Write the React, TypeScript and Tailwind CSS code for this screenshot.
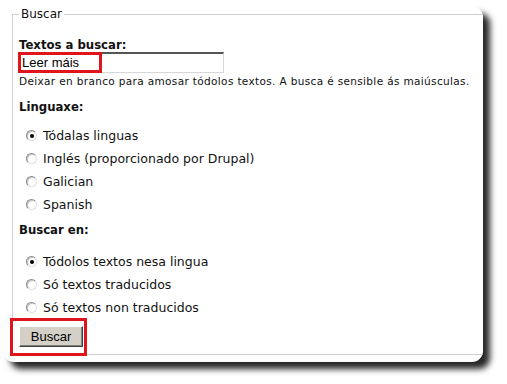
import React from 'react';

const verdana = { fontFamily: '"DejaVu Sans", Verdana, sans-serif' };

function Radio({ label, checked }: { label: string; checked?: boolean }) {
  return (
    <div className="flex h-[23px] items-center pl-[7px]">
      <span className="flex h-[11px] w-[11px] items-center justify-center rounded-full border border-t-[#8a8a8a] border-l-[#8a8a8a] border-r-[#e2e2e2] border-b-[#e2e2e2] bg-white shadow-[inset_1px_1px_0_#c8c8c8]">
        {checked && <span className="h-[4px] w-[4px] rounded-full bg-black" />}
      </span>
      <span className="ml-[6px] text-[12.5px] leading-[14px] text-[#111]">{label}</span>
    </div>
  );
}

export default function App() {
  return (
    <div className="h-[384px] w-[507px] bg-white pt-[6px]" style={verdana}>
      <div className="ml-[3px] h-[356px] w-[480px] overflow-hidden rounded-[11px] bg-white shadow-[7px_7px_6px_rgba(0,0,0,0.85)]">
        <fieldset className="ml-[9px] mt-[1px] w-[490px] border border-[#cfcfcf] pb-[7px] pl-[6px]">
          <legend className="px-[2px] text-[12px] leading-[14px] text-[#111]">Buscar</legend>

          <div className="mt-[17px] text-[11.7px] font-bold leading-[14px] text-[#111]">Textos a buscar:</div>
          <div className="relative h-[21px] w-[205px]">
            <div className="flex h-full w-full items-center border border-t-2 border-t-[#555] border-l-[#888] border-r-[#d8d8d8] border-b-[#d8d8d8] bg-white pl-[2px] text-[13px] text-black" style={{ fontFamily: '"Liberation Sans", Arial, sans-serif' }}>
              Leer máis
            </div>
            <div className="absolute left-[-1px] top-0 h-[21px] w-[84px] border-[3px] border-[#e0141b]" />
          </div>
          <div className="mt-[1px] text-[10.5px] leading-[14px] tracking-[0.35px] text-[#111]">
            Deixar en branco para amosar tódolos textos. A busca é sensible ás maiúsculas.
          </div>

          <div className="mt-[12px] text-[11.7px] font-bold leading-[14px] text-[#111]">Linguaxe:</div>
          <div className="mt-[10px]">
            <Radio label="Tódalas linguas" checked />
            <Radio label="Inglés (proporcionado por Drupal)" />
            <Radio label="Galician" />
            <Radio label="Spanish" />
          </div>

          <div className="mt-[7px] text-[11.7px] font-bold leading-[14px] text-[#111]">Buscar en:</div>
          <div className="mt-[13px]">
            <Radio label="Tódolos textos nesa lingua" checked />
            <Radio label="Só textos traducidos" />
            <Radio label="Só textos non traducidos" />
          </div>

          <div className="relative mt-[7px] h-[21px] w-[64px]">
            <button
              className="flex h-full w-full items-center justify-center border border-t-white border-l-white border-r-[#404040] border-b-[#404040] bg-[#d4d0c8] text-[13px] text-black shadow-[inset_-1px_-1px_0_#808080]"
              style={{ fontFamily: '"Liberation Sans", Arial, sans-serif' }}
            >
              Buscar
            </button>
            <div className="absolute left-[-9px] top-[-8px] h-[38px] w-[77px] border-[3px] border-[#e0141b]" />
          </div>
        </fieldset>
      </div>
    </div>
  );
}
